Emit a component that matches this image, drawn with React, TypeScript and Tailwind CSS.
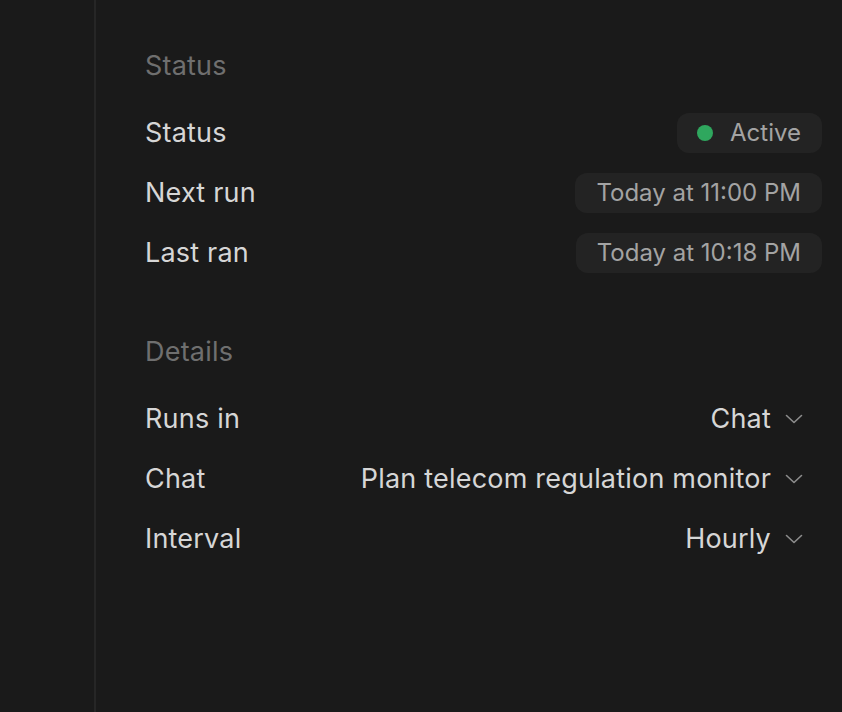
import React from 'react';

type Row = { label: string; value: string };

function Chevron() {
  return (
    <svg width="18" height="10" viewBox="0 0 18 10" fill="none" className="shrink-0">
      <path d="M1.5 1.5L9 8.5L16.5 1.5" stroke="#8c8c8c" strokeWidth="1.6" strokeLinecap="round" strokeLinejoin="round" />
    </svg>
  );
}

function Pill({ children, className = '' }: { children: React.ReactNode; className?: string }) {
  return (
    <div className={`flex h-10 items-center rounded-[12px] bg-[#232323] pr-[21px] text-[24px] tracking-normal text-[#a3a3a3] ${className}`}>
      {children}
    </div>
  );
}

function Select({ value }: { value: string }) {
  return (
    <button className="flex h-10 items-center gap-[14px] pl-5 pr-[19px] text-[27px] tracking-[0.2px] text-[#d6d6d6]">
      <span>{value}</span>
      <Chevron />
    </button>
  );
}

const details: Row[] = [
  { label: 'Runs in', value: 'Chat' },
  { label: 'Chat', value: 'Plan telecom regulation monitor' },
  { label: 'Interval', value: 'Hourly' },
];

export default function App() {
  return (
    <div className="flex h-[712px] w-[842px] bg-[#1a1a1a] font-['Inter',sans-serif] tracking-[0.2px]">
      {/* sidebar edge */}
      <div className="w-[96px] shrink-0 border-r-2 border-[#262626]" />

      <div className="flex-1 pl-[49px] pr-5 pt-[48px]">
        {/* Status */}
        <h3 className="h-9 leading-9 text-[27px] text-[#6f6f6f]">Status</h3>
        <div className="mt-[19px]">
          <div className="flex h-[60px] items-center justify-between">
            <span className="text-[27px] text-[#d6d6d6]">Status</span>
            <Pill className="pl-5">
              <span className="mr-[17px] h-4 w-4 rounded-full bg-[#2fa75e]" />
              Active
            </Pill>
          </div>
          <div className="flex h-[60px] items-center justify-between">
            <span className="text-[27px] text-[#d6d6d6]">Next run</span>
            <Pill className="pl-[21px]">Today at 11:00 PM</Pill>
          </div>
          <div className="flex h-[60px] items-center justify-between">
            <span className="text-[27px] text-[#d6d6d6]">Last ran</span>
            <Pill className="pl-[21px]">Today at 10:18 PM</Pill>
          </div>
        </div>

        {/* Details */}
        <h3 className="mt-[51px] h-9 leading-9 text-[27px] text-[#6f6f6f]">Details</h3>
        <div className="mt-[19px]">
          {details.map((row) => (
            <div key={row.label} className="flex h-[60px] items-center justify-between">
              <span className="text-[27px] text-[#d6d6d6]">{row.label}</span>
              <Select value={row.value} />
            </div>
          ))}
        </div>
      </div>
    </div>
  );
}
